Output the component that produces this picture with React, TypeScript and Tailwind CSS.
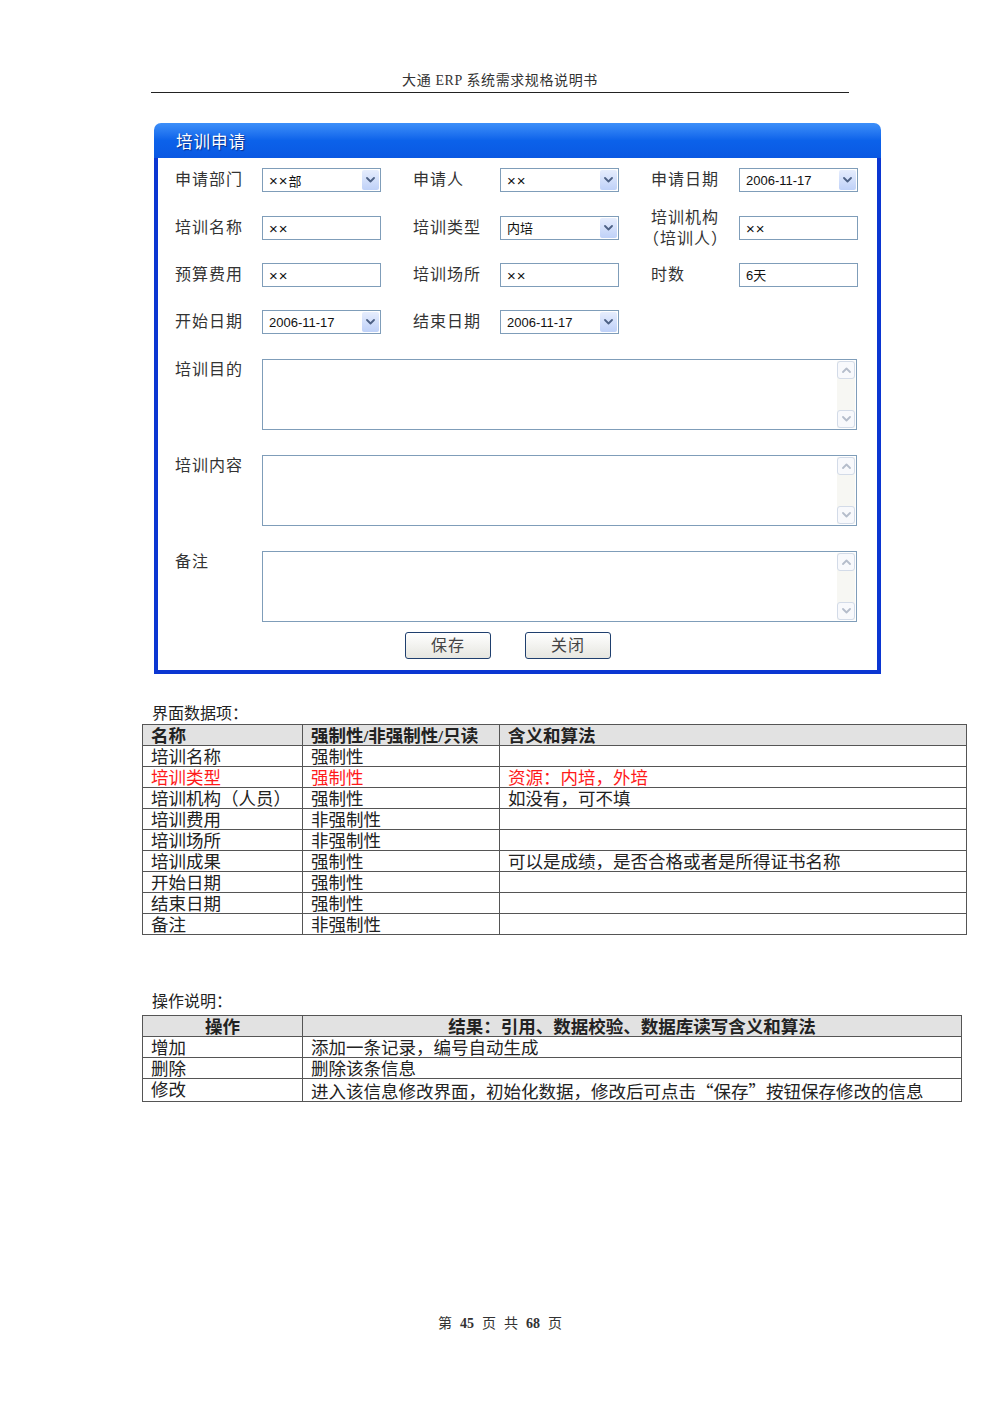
import React from 'react';

const serif = "font-['Liberation_Serif','Noto_Sans_CJK_SC',serif]";
const sans = "font-['Liberation_Sans','Noto_Sans_CJK_SC',sans-serif]";
const cjk = "font-['Noto_Sans_CJK_SC',sans-serif]";

const Chevron = ({ up = false, color = '#4d6185' }: { up?: boolean; color?: string }) => (
  <svg width="9" height="6" viewBox="0 0 9 6" className={up ? 'rotate-180' : ''}>
    <path d="M1 1L4.5 4.5L8 1" fill="none" stroke={color} strokeWidth="1.8" strokeLinecap="round" strokeLinejoin="round" />
  </svg>
);

// the "××" placeholder reads wider than the rest of the field text
const Value = ({ value }: { value: string }) => {
  const m = value.match(/^(×+)(.*)$/);
  if (!m) return <span className={`${sans} pl-[6px] text-[13px] leading-none text-[#111]`}>{value}</span>;
  return (
    <span className={`${sans} pl-[6px] text-[13px] leading-none text-[#111]`}>
      <span className="text-[15px] tracking-[1px]">{m[1]}</span>
      {m[2]}
    </span>
  );
};

const Select = ({ value }: { value: string }) => (
  <div className="flex h-[24px] w-[119px] items-center border border-[#7f9db9] bg-white">
    <Value value={value} />
    <span className="ml-auto mr-[1px] flex h-[20px] w-[17px] items-center justify-center rounded-[2px] bg-linear-to-b from-[#e6edfd] to-[#bfd1f8]">
      <Chevron />
    </span>
  </div>
);

const Input = ({ value }: { value: string }) => (
  <div className="flex h-[24px] w-[119px] items-center border border-[#7f9db9] bg-white">
    <Value value={value} />
  </div>
);

const Label = ({ children, first = false }: { children: React.ReactNode; first?: boolean }) => (
  <div className={`${sans} ${first ? '' : 'ml-[32px]'} w-[87px] text-[16px] leading-[20px] tracking-[1px] text-[#333]`}>{children}</div>
);

const TextArea = ({ label }: { label: string }) => (
  <div className="flex">
    <div className={`${sans} w-[87px] pt-[1px] text-[16px] leading-[20px] tracking-[1px] text-[#333]`}>{label}</div>
    <div className="flex h-[71px] w-[595px] justify-end border border-[#7f9db9] bg-white p-[1px]">
      <div className="flex w-[18px] flex-col justify-between bg-[#f7f7f3]">
        <span className="flex h-[18px] items-center justify-center rounded-[3px] border border-[#d3dbe8] bg-[#f8f9fc]">
          <Chevron up color="#b5bdcb" />
        </span>
        <span className="flex h-[18px] items-center justify-center rounded-[3px] border border-[#d3dbe8] bg-[#f8f9fc]">
          <Chevron color="#b5bdcb" />
        </span>
      </div>
    </div>
  </div>
);

const Button = ({ children }: { children: React.ReactNode }) => (
  <button className={`${sans} flex h-[27px] w-[86px] items-center justify-center rounded-[3px] border border-[#1f3f6e] bg-linear-to-b from-white to-[#e6e6e0] text-[16px] tracking-[1px] text-[#444]`}>
    {children}
  </button>
);

const fields = [
  { name: '培训名称', kind: '强制性', note: '' },
  { name: '培训类型', kind: '强制性', note: '资源：内培，外培', red: true },
  { name: '培训机构（人员）', kind: '强制性', note: '如没有，可不填' },
  { name: '培训费用', kind: '非强制性', note: '' },
  { name: '培训场所', kind: '非强制性', note: '' },
  { name: '培训成果', kind: '强制性', note: '可以是成绩，是否合格或者是所得证书名称' },
  { name: '开始日期', kind: '强制性', note: '' },
  { name: '结束日期', kind: '强制性', note: '' },
  { name: '备注', kind: '非强制性', note: '' },
];

const ops = [
  { op: '增加', res: <>添加一条记录，编号自动生成</> },
  { op: '删除', res: <>删除该条信息</> },
  {
    op: '修改',
    res: (
      <>
        进入该信息修改界面，初始化数据，修改后可点击<span className={cjk}>“保存”</span>按钮保存修改的信息
      </>
    ),
  },
];

const td = 'h-[20.4px] border-[1.5px] border-[#555] p-0 pl-[8px] pt-[3px] text-left align-top leading-[17px]';
const th = 'h-[21px] border-[1.5px] border-[#555] p-0 pt-[2px] align-top leading-[18px] font-bold';

export default function App() {
  return (
    <div className={`${serif} relative h-[1415px] w-[1000px] bg-white text-[#222]`}>
      {/* page header */}
      <div className="ml-[151px] w-[698px] border-b-[1.5px] border-[#222] pt-[72px] pb-[2px] text-center text-[14px] leading-[18px] tracking-[0.6px] text-[#333]">
        大通 ERP 系统需求规格说明书
      </div>

      {/* window */}
      <div className="ml-[154px] mt-[30px] w-[727px]">
        <div className="flex h-[35px] items-center rounded-t-[7px] bg-linear-to-b from-[#3d8ff9] via-[#0c62ea] to-[#0a58e2] pl-[22px] pt-[3px]">
          <span className={`${sans} text-[16.5px] tracking-[1px] text-white [text-shadow:1px_1px_1px_#0a2f8a]`}>培训申请</span>
        </div>
        <div className="border-x-4 border-b-4 border-[#0b36d2] bg-white pl-[17px] pt-[10px] pb-[11px]">
          <div className="flex h-[24px] items-center">
            <Label first>申请部门</Label>
            <Select value="××部" />
            <Label>申请人</Label>
            <Select value="××" />
            <Label>申请日期</Label>
            <div className="ml-[1px]"><Select value="2006-11-17" /></div>
          </div>
          <div className="mt-[24px] flex h-[24px] items-center">
            <Label first>培训名称</Label>
            <Input value="××" />
            <Label>培训类型</Label>
            <Select value="内培" />
            <div className={`${sans} ml-[32px] w-[88px] text-[16px] leading-[21px] tracking-[1px] text-[#333]`}>
              <div>培训机构</div>
              <div className="-ml-[8px]">（培训人）</div>
            </div>
            <Input value="××" />
          </div>
          <div className="mt-[23px] flex h-[24px] items-center">
            <Label first>预算费用</Label>
            <Input value="××" />
            <Label>培训场所</Label>
            <Input value="××" />
            <Label>时数</Label>
            <div className="ml-[1px]"><Input value="6天" /></div>
          </div>
          <div className="mt-[23px] flex h-[24px] items-center">
            <Label first>开始日期</Label>
            <Select value="2006-11-17" />
            <Label>结束日期</Label>
            <Select value="2006-11-17" />
          </div>
          <div className="mt-[25px]"><TextArea label="培训目的" /></div>
          <div className="mt-[25px]"><TextArea label="培训内容" /></div>
          <div className="mt-[25px]"><TextArea label="备注" /></div>
          <div className="mt-[10px] flex gap-[34px] pl-[230px]">
            <Button>保存</Button>
            <Button>关闭</Button>
          </div>
        </div>
      </div>

      {/* data items */}
      <div className="ml-[152px] mt-[30px] text-[16px] leading-[20px]">界面数据项：</div>
      <table className="ml-[142px] mt-[0px] w-[825px] border-collapse border-[1.5px] border-[#555] text-[17.5px]">
        <colgroup>
          <col className="w-[160px]" />
          <col className="w-[197px]" />
          <col />
        </colgroup>
        <thead>
          <tr className="bg-[#e2e2e2]">
            <th className={`${th} pl-[8px] text-left`}>名称</th>
            <th className={`${th} pl-[8px] text-left`}>强制性/非强制性/只读</th>
            <th className={`${th} pl-[8px] text-left`}>含义和算法</th>
          </tr>
        </thead>
        <tbody>
          {fields.map((f) => (
            <tr key={f.name} className={f.red ? 'text-[#ff1a1a]' : ''}>
              <td className={td}>{f.name}</td>
              <td className={td}>{f.kind}</td>
              <td className={td}>{f.note}</td>
            </tr>
          ))}
        </tbody>
      </table>

      {/* operations */}
      <div className="ml-[152px] mt-[57px] text-[16px] leading-[20px]">操作说明：</div>
      <table className="ml-[142px] mt-[3px] w-[820px] border-collapse border-[1.5px] border-[#555] text-[17.5px]">
        <colgroup>
          <col className="w-[160px]" />
          <col />
        </colgroup>
        <thead>
          <tr className="bg-[#e2e2e2]">
            <th className={`${th} text-center`}>操作</th>
            <th className={`${th} text-center`}>结果：引用、数据校验、数据库读写含义和算法</th>
          </tr>
        </thead>
        <tbody>
          {ops.map((o) => (
            <tr key={o.op}>
              <td className={td}>{o.op}</td>
              <td className={td}>{o.res}</td>
            </tr>
          ))}
        </tbody>
      </table>

      {/* page footer */}
      <div className="mt-[212px] text-center text-[14px] leading-[20px] text-[#333]">
        第<span className="mx-[8px] font-bold">45</span>页<span className="mx-[8px]">共</span>
        <span className="mr-[8px] font-bold">68</span>页
      </div>
    </div>
  );
}
